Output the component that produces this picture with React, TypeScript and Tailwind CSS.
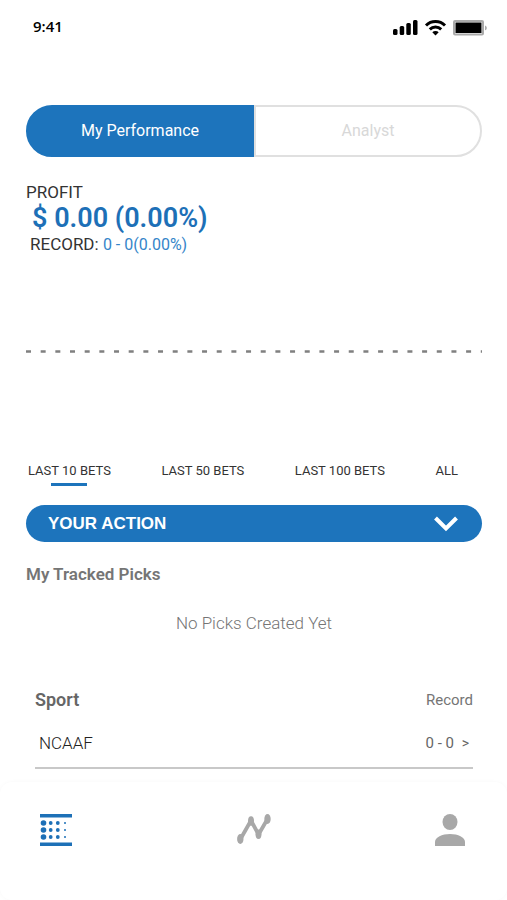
import React, { useState } from "react";
import clsx from "clsx";

const views = ["My Performance", "Analyst"];
const ranges = ["LAST 10 BETS", "LAST 50 BETS", "LAST 100 BETS", "ALL"];
const records = [{ sport: "NCAAF", record: "0 - 0" }];

const StatusBar: React.FC = () => (
  <div className="flex h-[53px] items-center justify-between pr-5 pl-[33px]">
    <span className="font-['Open_Sans',sans-serif] text-[15px] font-semibold">9:41</span>
    <svg width="94" height="20" viewBox="0 0 94 20" aria-hidden="true">
      <rect x="0" y="12" width="4.5" height="6" rx="1.5" />
      <rect x="6.7" y="9" width="4.5" height="9" rx="1.5" />
      <rect x="13.3" y="6" width="4.5" height="12" rx="1.5" />
      <rect x="20" y="3" width="4.5" height="15" rx="1.5" />
      <path d="M33 8.5a13.5 13.5 0 0 1 19 0" fill="none" stroke="black" strokeWidth="3" />
      <path d="M36.8 12.4a8.2 8.2 0 0 1 11.4 0" fill="none" stroke="black" strokeWidth="3" />
      <path d="M39.3 15.2a4.6 4.6 0 0 1 6.4 0L42.5 18.5z" />
      <rect x="61" y="4" width="29" height="13.5" rx="1" fill="none" stroke="#aaa" strokeWidth="2" />
      <rect x="62.5" y="5.5" width="26" height="10.5" />
      <path d="M92 8.5c2.4.8 2.4 4 0 4.8z" fill="#aaa" />
    </svg>
  </div>
);

const BoardIcon: React.FC = () => (
  <svg width="32" height="32" viewBox="0 0 32 32" fill="#1d70b7" aria-hidden="true">
    <rect width="32" height="3.5" />
    <rect y="28.5" width="32" height="3.5" />
    {[9, 16, 23].map((y) => (
      <g key={y}>
        <circle cx="3.5" cy={y} r="2.8" />
        <circle cx="10.7" cy={y} r="1.9" />
        <circle cx="17.8" cy={y} r="1.9" />
        <circle cx="25" cy={y} r="1" />
      </g>
    ))}
  </svg>
);

const TrendIcon: React.FC = () => (
  <svg width="34" height="32" viewBox="0 0 34 32" fill="#a8a8a8" aria-hidden="true">
    <path d="M3.5 25 14 6.5l7.5 14L30.5 5" fill="none" stroke="#a8a8a8" strokeWidth="3.8" />
    <ellipse cx="3.3" cy="25" rx="3.2" ry="4.9" />
    <ellipse cx="14" cy="7" rx="3" ry="4.7" />
    <ellipse cx="21.5" cy="20.3" rx="3" ry="4.7" />
    <ellipse cx="30.5" cy="5" rx="3.2" ry="4.9" />
  </svg>
);

const PersonIcon: React.FC = () => (
  <svg width="30" height="32" viewBox="0 0 30 32" fill="#a8a8a8" aria-hidden="true">
    <ellipse cx="15" cy="8" rx="7.5" ry="8" />
    <path d="M0 32v-4c0-4.5 7-8 15-8s15 3.5 15 8v4z" />
  </svg>
);

const App: React.FC = () => {
  const [view, setView] = useState(views[0]);
  const [range, setRange] = useState(ranges[0]);

  return (
    <div className="flex min-h-screen flex-col bg-white font-[Roboto,sans-serif] text-[#333]">
      <header className="text-black">
        <StatusBar />
      </header>

      <main className="flex-1 pt-[52px] pr-[25px] pl-[26px]">
        <div className="grid h-[52px] grid-cols-2">
          {views.map((name) => (
            <button
              key={name}
              onClick={() => setView(name)}
              className={clsx(
                "border-2 text-base first:rounded-l-full last:rounded-r-full",
                view === name ? "border-[#1d74bc] bg-[#1d74bc] text-white" : "border-[#e0e0e0] text-[#d8d8d8]"
              )}>
              {name}
            </button>
          ))}
        </div>

        <section className="mt-[23px]">
          <h2 className="text-[17px] leading-6">PROFIT</h2>
          <p className="pl-1.5 text-[27px] leading-7 font-semibold text-[#1d70b7]">$ 0.00 (0.00%)</p>
          <p className="pl-1 text-[17px] leading-6">
            RECORD: <span className="text-base text-[#3585c9]">0 - 0(0.00%)</span>
          </p>
        </section>

        <svg className="mt-[93px] block h-[3px] w-full" viewBox="0 0 456 3" preserveAspectRatio="none" aria-hidden="true">
          <line x1="0" y1="1.5" x2="456" y2="1.5" stroke="#808080" strokeWidth="2.5" strokeDasharray="5 9.67" />
        </svg>

        <div className="mt-[106px] flex justify-between pr-6 pl-0.5">
          {ranges.map((name) => (
            <button key={name} onClick={() => setRange(name)} className="flex flex-col items-center text-[13px] leading-6">
              {name}
              <span className={clsx("h-[3px] w-9", range === name ? "bg-[#1d74bc]" : "hidden")} />
            </button>
          ))}
        </div>

        <button className="mt-[19px] flex h-[37px] w-full items-center justify-between rounded-full bg-[#1d74bc] pr-6 pl-[22px] text-white">
          <span className="font-['Liberation_Sans',sans-serif] text-[17px] font-bold">YOUR ACTION</span>
          <svg width="24" height="16" viewBox="0 0 24 16" fill="none" stroke="white" strokeWidth="4" aria-hidden="true">
            <path d="M1.5 2 12 12.5 22.5 2" />
          </svg>
        </button>

        <section className="mt-5 text-[#757575]">
          <h2 className="text-[17px] leading-6 font-semibold">My Tracked Picks</h2>
          <p className="mt-[25px] text-center text-[17px] leading-6 font-light">No Picks Created Yet</p>
        </section>

        <table className="mx-[9px] mt-[53px] w-[calc(100%-18px)] text-[#666]">
          <thead>
            <tr className="h-6">
              <th className="text-left text-lg leading-6 font-semibold">Sport</th>
              <th className="text-right text-[15px] leading-6 font-normal text-[#757575]">Record</th>
            </tr>
          </thead>
          <tbody>
            {records.map(({ sport, record }) => (
              <tr key={sport} className="h-14 border-b-2 border-[#c8c8c8]">
                <td className="pt-2 pl-1 text-[17px] font-light text-[#222]">{sport}</td>
                <td className="pt-2 pr-1 text-right text-[15px]">
                  {record} <span className="ml-1 text-sm">&gt;</span>
                </td>
              </tr>
            ))}
          </tbody>
        </table>
      </main>

      <nav className="mt-[13px] flex h-[118px] items-start justify-between rounded-xl bg-white pt-8 pr-[42px] pl-10 shadow-[0_0_4px_rgba(0,0,0,0.03)]">
        <a href="#board" aria-label="Board">
          <BoardIcon />
        </a>
        <a href="#performance" aria-label="Performance">
          <TrendIcon />
        </a>
        <a href="#profile" aria-label="Profile">
          <PersonIcon />
        </a>
      </nav>
    </div>
  );
};

export default App;
